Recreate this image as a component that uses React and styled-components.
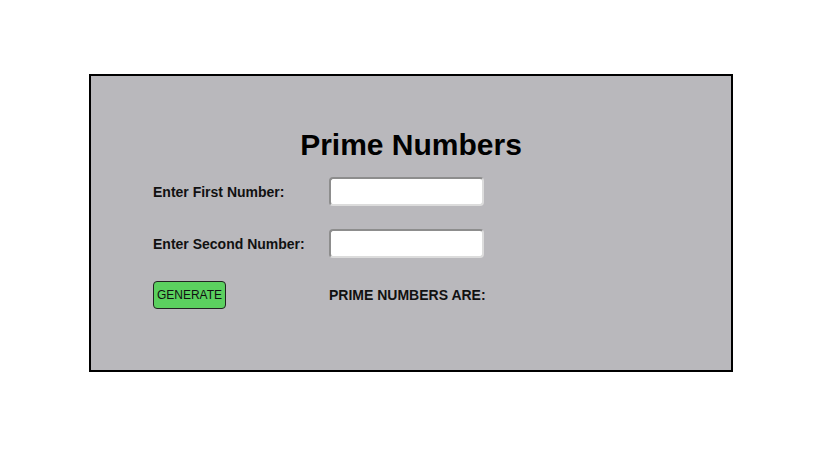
import React, { useState } from 'react';
import styled, { createGlobalStyle } from 'styled-components';

const GlobalStyle = createGlobalStyle`
  body {
    margin: 0;
    background: #ffffff;
    font-family: "Liberation Sans", Arial, sans-serif;
  }
`;

const Page = styled.div`
  padding: 74px 0 0 89px;
`;

const Panel = styled.div`
  box-sizing: border-box;
  width: 644px;
  height: 298px;
  border: 2px solid #000;
  background: #b9b8bc;
  padding: 52px 0 0 62px;
`;

const Title = styled.h1`
  margin: 0 0 15px -62px;
  font-size: 30px;
  line-height: 34px;
  font-weight: bold;
  text-align: center;
  color: #000;
`;

const Form = styled.div`
  display: grid;
  grid-template-columns: 176px 155px;
  grid-template-rows: 29px 29px 28px;
  row-gap: 23px;
  align-items: center;
`;

const Label = styled.label`
  font-size: 14px;
  font-weight: bold;
  color: #111;
`;

const Input = styled.input`
  box-sizing: border-box;
  width: 155px;
  height: 29px;
  border-style: solid;
  border-width: 2px;
  border-color: #8d8d8d #dcdcdc #dcdcdc #8d8d8d;
  border-radius: 4px;
  background: #fff;
  font-size: 14px;
  padding: 2px 6px;
  outline: none;
`;

const Button = styled.button`
  justify-self: start;
  box-sizing: border-box;
  width: 73px;
  height: 28px;
  border: 1px solid #222;
  border-radius: 4px;
  background: #5bd05f;
  color: #111;
  font-family: "Liberation Sans", Arial, sans-serif;
  font-size: 12px;
  padding: 0;
`;

const Result = styled.div`
  font-size: 14px;
  font-weight: bold;
  color: #111;
  white-space: nowrap;
`;

export default function App() {
  const [first, setFirst] = useState('');
  const [second, setSecond] = useState('');
  const [primes, setPrimes] = useState([]);

  const handleGenerate = () => {
    const a = parseInt(first, 10);
    const b = parseInt(second, 10);
    if (isNaN(a) || isNaN(b)) return;
    const list = [];
    for (let n = Math.max(2, Math.min(a, b)); n <= Math.max(a, b); n++) {
      let isPrime = true;
      for (let d = 2; d * d <= n; d++) {
        if (n % d === 0) { isPrime = false; break; }
      }
      if (isPrime) list.push(n);
    }
    setPrimes(list);
  };

  return (
    <>
      <GlobalStyle />
      <Page>
        <Panel>
          <Title>Prime Numbers</Title>
          <Form>
            <Label>Enter First Number:</Label>
            <Input value={first} onChange={(e) => setFirst(e.target.value)} />
            <Label>Enter Second Number:</Label>
            <Input value={second} onChange={(e) => setSecond(e.target.value)} />
            <Button onClick={handleGenerate}>GENERATE</Button>
            <Result>PRIME NUMBERS ARE: {primes.join(', ')}</Result>
          </Form>
        </Panel>
      </Page>
    </>
  );
}
